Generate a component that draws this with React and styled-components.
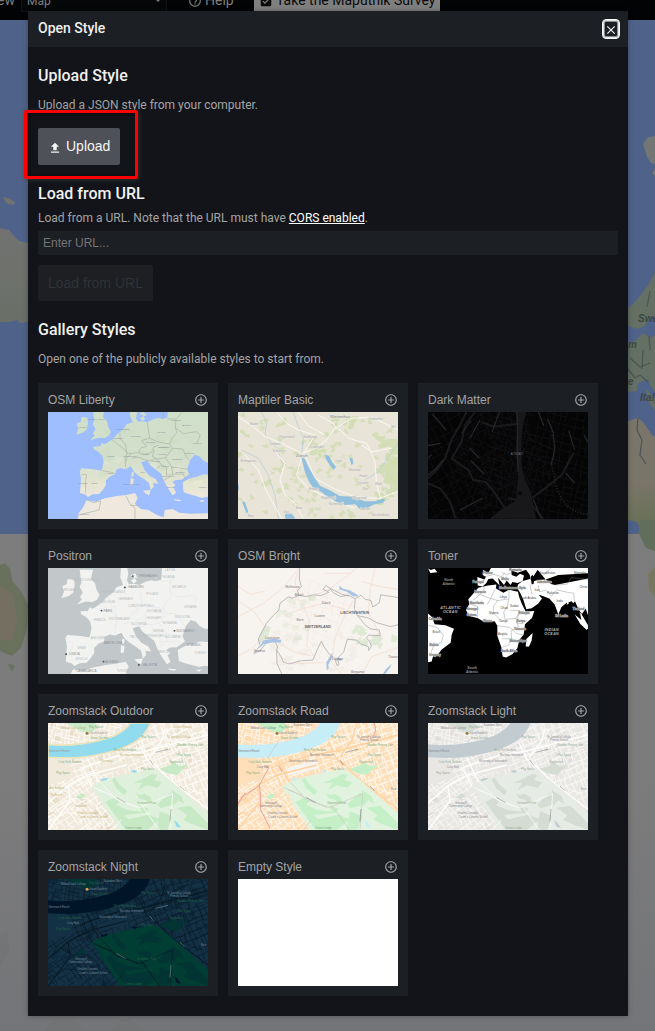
import React from "react";
import styled, { createGlobalStyle } from "styled-components";
import { MdAddCircleOutline, MdClose, MdFileUpload, MdHelpOutline, MdAssignmentTurnedIn } from "react-icons/md";

const GlobalStyle = createGlobalStyle`
  * { box-sizing: border-box; }
  body { margin: 0; background: #7a7b7c; font-family: Roboto, sans-serif; }
  h1, h2, p { margin: 0; }
`;

const Page = styled.div`
  position: relative;
  width: 655px;
  height: 1031px;
  overflow: hidden;
`;
const Backdrop = styled.svg`
  position: absolute;
  inset: 0;
`;
const TopBar = styled.header`
  position: absolute;
  top: -20px;
  left: 0;
  width: 100%;
  height: 40px;
  display: flex;
  background: #020304;
  color: #7e7e7e;
  font-size: 14px;
  line-height: 41px;
  white-space: nowrap;
`;
const ViewLabel = styled.span`
  width: 21px;
  padding-right: 6px;
  display: flex;
  justify-content: flex-end;
`;
const ViewSelect = styled.div`
  width: 146px;
  height: 32px;
  margin-right: 21px;
  padding: 10px 5px 0 5px;
  display: flex;
  justify-content: space-between;
  align-items: center;
  border: 1px solid #101214;
  background: #060708;
  font-size: 12px;
  line-height: 14px;
`;
const Caret = styled.i`
  border: 3px solid transparent;
  border-top-color: #777;
  margin-top: 2px;
`;
const HelpLink = styled.span`
  width: 66px;
  display: flex;
  gap: 3px;
  svg { margin-top: 14px; }
`;
const SurveyLink = styled.span`
  width: 186px;
  padding-left: 5px;
  display: flex;
  gap: 3px;
  background: #7f7f7f;
  color: #0a0a0a;
  svg { margin-top: 14px; }
`;

const Modal = styled.section`
  position: relative;
  width: 600px;
  height: 1005px;
  margin: 11px 0 0 28px;
  background: #121419;
  box-shadow: 0 0 5px rgba(0, 0, 0, 0.3);
  color: #a4a4a4;
`;
const ModalHeader = styled.div`
  height: 36px;
  padding: 0 8px 0 10px;
  display: flex;
  justify-content: space-between;
  background: #1c1f24;
`;
const ModalTitle = styled.h1`
  color: #f0f0f0;
  font-size: 14px;
  font-weight: 500;
  line-height: 34px;
`;
const CloseButton = styled.button`
  width: 18px;
  height: 20px;
  margin-top: 8px;
  padding: 2px 0 0;
  display: flex;
  align-items: center;
  justify-content: center;
  border: 1px solid #fff;
  border-radius: 4px;
  background: #1c1f24;
  box-shadow: inset 0 0 0 1px #e4e4e4, inset 0 0 0 2px #8b8c8e;
  color: #f4f4f4;
`;
const ModalBody = styled.div`
  padding: 20px 10px 20px;
`;
const Section = styled.section`
  height: ${(p) => p.$height || "auto"};
`;
const Heading = styled.h2`
  color: #f0f0f0;
  font-size: 16px;
  font-weight: 500;
  line-height: 18px;
`;
const Text = styled.p`
  font-size: 12px;
  line-height: 16px;
  margin-top: ${(p) => p.$top}px;
`;
const Link = styled.a`
  color: #fff;
  text-decoration: underline;
`;
const Button = styled.button`
  height: ${(p) => (p.$muted ? 36 : 37)}px;
  margin-top: ${(p) => p.$top}px;
  padding: ${(p) => (p.$muted ? "0 10px" : "0 10px 2px")};
  display: flex;
  align-items: center;
  gap: 4px;
  border: 0;
  border-radius: 2px;
  background: ${(p) => (p.$muted ? "#1d1f23" : "#4f5158")};
  color: ${(p) => (p.$muted ? "#303236" : "#f4f4f4")};
  font: 14px "Liberation Sans", sans-serif;
  svg { margin-top: 4px; }
`;
const UrlInput = styled.input`
  display: block;
  width: 580px;
  height: 24px;
  margin-top: 5px;
  padding: 0 5px;
  border: 0;
  background: #1c1f24;
  font: 12px "Liberation Sans", sans-serif;
  &::placeholder { color: #757575; opacity: 1; }
`;
const Gallery = styled.div`
  display: grid;
  grid-template-columns: repeat(3, 180px);
  gap: 10px;
  margin-top: 16px;
`;
const Card = styled.article`
  height: 145.67px;
  padding: 10px;
  background: #1c1f24;
`;
const CardTitle = styled.div`
  height: 19px;
  display: flex;
  justify-content: space-between;
  font: 12px/14px "Liberation Sans", sans-serif;
`;
const Thumb = styled.svg`
  display: block;
  width: 160px;
  height: 106.67px;
  background: ${(p) => p.$bg};
  font-family: "Liberation Sans", sans-serif;
`;
const Highlight = styled.div`
  position: absolute;
  left: 24px;
  top: 110px;
  width: 114px;
  height: 69px;
  border: 3px solid #fe0000;
  border-radius: 2px;
  box-shadow: 1px 1px 5px rgba(60, 64, 60, 0.7), inset 1px 1px 5px rgba(0, 0, 0, 0.6);
`;

function random(seed) {
  let s = seed;
  return () => {
    s = (s * 16807) % 2147483647;
    return s / 2147483647;
  };
}

// A family of roughly parallel, broken streets around a centre point.
function streets(seed, cx, cy, r, angle, step) {
  const rnd = random(seed);
  let d = "";
  for (const turn of [0, 1.5]) {
    const a = (angle * Math.PI) / 180 + turn;
    for (let o = -r; o < r; o += step * (0.6 + rnd() * 0.8)) {
      for (let t = -r; t < r; ) {
        const len = 18 + rnd() * 55;
        const at = (k, j) =>
          `${(cx + Math.cos(a) * k - Math.sin(a) * (o + j)).toFixed(0)} ${(cy + Math.sin(a) * k + Math.cos(a) * (o + j)).toFixed(0)}`;
        d += `M${at(t, 0)}Q${at(t + len / 2, rnd() * 8 - 4)} ${at(t + len, rnd() * 10 - 5)}`;
        t += len + rnd() * 16;
      }
    }
  }
  return d;
}

function blobs(seed, n, x, y, w, h, size) {
  const rnd = random(seed);
  let d = "";
  for (let i = 0; i < n; i++) {
    const cx = x + rnd() * w;
    const cy = y + rnd() * h;
    for (let k = 0; k < 9; k++) {
      const r = size * (0.25 + rnd());
      d += `${k ? "L" : "M"}${(cx + Math.cos(k * 0.7) * r).toFixed(0)} ${(cy + Math.sin(k * 0.7) * r * 0.8).toFixed(0)}`;
    }
    d += "Z";
  }
  return d;
}

function Labels({ items, color, size = 8, halo, ...rest }) {
  return (
    <g fill={color} fontSize={size} textAnchor="middle" stroke={halo} strokeWidth={halo ? 2 : 0} paintOrder="stroke" {...rest}>
      {items.map(([name, x, y]) => (
        <text key={name + x + y} x={x} y={y}>{name}</text>
      ))}
    </g>
  );
}

const EUROPE =
  "M415 90L412 128 398 132 385 129 370 133 352 142 338 139 324 140 318 130 322 111 318 90 302 90 300 122 308 142 290 148 280 163 262 177 248 192 232 203 224 208 215 204 211 214 190 215 192 223 205 230 217 243 221 262 215 287 190 283 154 280 149 288 153 312 150 354 165 358 174 366 188 358 207 357 219 344 228 330 228 316 240 304 255 298 258 285 270 279 286 282 303 274 312 290 326 302 345 314 357 324 362 345 371 335 369 324 385 326 377 312 358 302 343 284 334 262 352 256 360 270 376 283 394 297 401 316 412 337 428 361 438 354 430 336 437 330 427 321 437 315 455 314 465 307 478 298 471 284 480 256 494 239 508 244 519 256 534 264 580 260 580 90ZM188 100L225 100 219 125 231 139 235 157 243 170 236 182 224 189 205 188 181 196 194 182 189 175 197 163 188 148 193 136ZM155 126L173 128 174 145 170 164 158 173 138 179 145 161 140 146 152 140ZM458 322L477 311 500 305 520 298 580 302 580 370 530 365 517 369 497 363 478 358 461 352ZM142 450L146 414 158 399 170 375 196 380 225 370 260 363 288 360 315 354 323 368 315 386 332 402 355 405 382 421 401 427 404 405 428 402 448 413 480 416 580 414 580 460ZM306 290L312 293 310 305 303 304ZM302 308L312 312 309 329 301 330ZM339 347L362 345 357 361 346 355ZM431 373L455 375 449 379 434 376ZM508 377L524 375 517 382ZM329 130L340 123 345 132 337 138ZM328 116L340 110 350 120 342 124Z";
const BORDERS =
  "M217 287L250 293M154 299L170 299 166 323 167 355M245 193L260 205 283 223 291 235 285 253 287 277M270 175L270 192 285 205 291 235M291 235L305 235 325 233 333 218 350 215 335 196 359 190 355 165 352 142M305 235L290 250 288 260M306 249L328 247 342 254M325 233L345 238 365 232 372 215 385 211M359 190L388 202 418 207M412 132L438 132 436 158 441 172 425 192 418 208 428 220 407 248 382 252 367 245 373 224M388 217L420 217M436 158L460 176 499 170 511 180 500 205M440 132L454 113M428 220L458 222 468 244 478 255M407 248L425 276 470 282M425 276L428 298 460 297M342 254L362 258 376 250 394 269 382 280M394 269L410 278 409 300 428 300M401 316L420 305M460 297L465 310M170 375L190 383 212 378 207 405 145 420M288 362L298 384 315 400 315 432M398 131L400 111";
const COUNTRIES = [
  ["United Kingdom", 199, 134], ["Ireland", 157, 160], ["Netherlands", 278, 166], ["Germany", 318, 187], ["Poland", 394, 173], ["Belarus", 470, 152], ["Ukraine", 501, 208], ["Belgium", 265, 192], ["Czechia", 361, 204], ["France", 243, 246], ["Switzerland", 300, 246], ["Austria", 345, 239], ["Hungary", 397, 239], ["Slovakia", 398, 218], ["Moldova", 478, 237], ["Romania", 442, 254], ["Serbia", 405, 276], ["Bulgaria", 450, 295], ["Italy", 338, 295], ["Croatia", 378, 260], ["Andorra", 240, 296], ["Portugal", 159, 326], ["Spain", 193, 326], ["Macedonia", 415, 306], ["Greece", 422, 338], ["Türkiye", 519, 340], ["Tunisia", 311, 393], ["Morocco", 163, 421], ["Tyrrhenian Sea", 304, 331], ["Lithuania", 438, 138],
];

function LibertyMap() {
  return (
    <Thumb viewBox="54 111 480 320" preserveAspectRatio="none" $bg="#9fbeff">
      <defs>
        <linearGradient id="liberty" x1="0" y1="90" x2="0" y2="430" gradientUnits="userSpaceOnUse">
          <stop offset="0" stopColor="#cfdfca" />
          <stop offset=".48" stopColor="#d3dfcb" />
          <stop offset=".68" stopColor="#e2e4cf" />
          <stop offset=".83" stopColor="#eee8de" />
        </linearGradient>
        <clipPath id="land"><path d={EUROPE} /></clipPath>
      </defs>
      <path d={EUROPE} fill="url(#liberty)" />
      <path d={blobs(81, 28, 220, 130, 300, 180, 18)} fill="#c0d8c0" opacity=".2" clipPath="url(#land)" />
      <path d={blobs(12, 15, 160, 250, 350, 160, 15)} fill="#f1eee1" opacity=".3" clipPath="url(#land)" />
      <path d={BORDERS} fill="none" stroke="#a2b09d" strokeWidth="1.8" />
      <Labels items={COUNTRIES} color="#8a899d" size={7.5} />
    </Thumb>
  );
}

function PositronMap() {
  return (
    <Thumb viewBox="54 99 480 318" preserveAspectRatio="none" $bg="#c2c8ca">
      <g transform="matrix(1.09 0 0 1.08 -56 -4)">
        <path d={EUROPE} fill="#f2f3f1" />
        <path d={BORDERS} fill="none" stroke="#dfe2e1" strokeWidth="1.3" />
      </g>
      <Labels color="#b9bdbe" size={9} items={[["UNITED KINGDOM", 168, 138], ["IRELAND", 119, 168], ["NETHERLANDS", 252, 174], ["GERMANY", 288, 195], ["POLAND", 367, 180], ["BELARUS", 448, 160], ["LITHUANIA", 410, 130], ["LATVIA", 420, 108], ["BELGIUM", 235, 202], ["CZECH REPUBLIC", 334, 214], ["SLOVAKIA", 372, 229], ["UKRAINE", 481, 218], ["FRANCE", 209, 257], ["SWITZERLAND", 268, 255], ["HUNGARY", 373, 250], ["MOLDOVA", 457, 248], ["ROMANIA", 419, 266], ["SLOVENIA", 326, 268], ["SERBIA", 384, 290], ["MONTENEGRO", 370, 304], ["BULGARIA", 428, 308], ["ANDORRA", 205, 310], ["ITALY", 310, 307], ["SPAIN", 155, 340], ["SEVILLE", 154, 374], ["GREECE", 398, 353], ["TURKEY", 512, 354], ["TUNISIA", 278, 410]]} />
      <Labels color="#8b9194" size={9} items={[["COPENHAGEN", 350, 127], ["HAMBURG", 318, 160], ["PARIS", 234, 229], ["LISBOA", 133, 359], ["BUCHAREST", 467, 290], ["ISTANBUL", 491, 332], ["BARCELONA", 249, 326], ["ALGIERS", 245, 381], ["VALLETTA", 359, 391], ["CASABLANCA", 169, 410]]} />
      <path d="M308 123h1M284 157h1M214 226h1M108 356h1M433 286h1M220 378h1M326 388h1" stroke="#4d5256" strokeWidth="5" strokeLinecap="round" />
    </Thumb>
  );
}

function BasicMap() {
  return (
    <Thumb viewBox="39 111 480 320" preserveAspectRatio="none" $bg="#e8e4d8">
      <path d={blobs(41, 75, 39, 111, 480, 320, 11)} fill="#cddcab" opacity=".7" />
      <path d={blobs(23, 26, 465, 190, 54, 190, 20) + blobs(17, 9, 330, 125, 60, 35, 13) + blobs(9, 13, 235, 190, 65, 55, 11)} fill="#cddcab" opacity=".75" />
      <path d={blobs(8, 16, 285, 240, 170, 75, 10) + blobs(55, 14, 200, 280, 80, 140, 10)} fill="#cddcab" opacity=".6" />
      <g fill="none" stroke="#b4cbd1" strokeWidth="2">
        <path d="M110 111L125 145 120 180 155 220 170 260M205 111L220 155 235 190 230 245M50 225L100 250 130 300 150 360 160 431M519 205L495 240 460 290 420 315" />
      </g>
      <g fill="none" stroke="#faf8f2" strokeWidth="3">
        <path d="M39 125L85 155 120 185 170 205 230 235 260 225 300 200 330 160 380 130 440 126 519 165M155 111L185 145 220 165 270 180 230 245M60 240L100 285 125 350 170 431M155 235L180 265 165 315 180 360 210 385 235 431M230 245L215 300 250 340 310 370 390 400M240 240L270 310 335 345 390 365 460 371 519 350M335 155L370 190 425 205 450 260 455 330 470 380M220 111L250 153 300 180M280 120L325 145 335 165M410 210L440 230 500 220" />
      </g>
      <path d="M229 246L239 251 252 278 268 307 285 332 319 348 344 363 379 365 390 362 398 371 419 379 449 379 474 371 481 375 474 383 445 389 428 398 403 401 391 388 361 390 336 382 308 365 288 350 266 340 252 321 239 289ZM301 238L312 243 323 264 333 275 326 285 316 272 302 252ZM373 247L383 251 385 266 379 270ZM51 379L60 381 70 410 64 415ZM180 416L201 416 211 431 181 431ZM39 325L42 338 39 349Z" fill="#91c0df" />
      <Labels items={[["Zürich", 231, 247], ["Winterthur", 345, 129]]} color="#777d83" size={13} halo="#efebe1" />
      <Labels items={[["Baden", 88, 151], ["Regensdorf", 186, 188], ["Glattbrugg", 254, 188], ["Dübendorf", 277, 220], ["Dietikon", 150, 211], ["Schlieren", 161, 231], ["Bremgarten", 70, 261], ["Uster", 340, 262], ["Wetzikon", 389, 287], ["Horgen", 266, 344], ["Wädenswil", 310, 373], ["Richterswil", 333, 390], ["Rapperswil", 403, 372], ["Rüti", 421, 346], ["Dürnten", 414, 328], ["Hinwil", 415, 305], ["Wald", 460, 331], ["Turbenthal", 453, 134], ["Wil", 504, 160], ["Zug", 183, 414], ["Baar", 222, 403], ["Muri", 77, 427], ["Lachen", 421, 404], ["Schübelbach", 467, 423]]} color="#a3a6a8" size={9} halo="#efebe1" />
    </Thumb>
  );
}

function DarkMap() {
  return (
    <Thumb viewBox="39 111 480 320" preserveAspectRatio="none" $bg="#050506">
      <g fill="none" stroke="#141416" strokeWidth="2">
        <path d={streets(9, 110, 200, 220, 65, 27)} />
        <path d={streets(23, 430, 260, 210, 15, 24)} />
        <path d={streets(29, 240, 250, 110, 25, 18)} stroke="#101012" />
      </g>
      <g fill="none" stroke="#1b1b1e" strokeWidth="6" strokeLinejoin="round">
        <path d="M155 111L135 150 110 193 91 248 69 281 39 310M180 111L150 150 140 200 110 250 160 285 175 315 212 321 240 355 275 408M325 145L235 155 200 141M350 370L390 340 440 300 475 235M39 325L75 340 105 380 122 431M280 370L345 382 385 431" />
      </g>
      <g fill="none" stroke="#27272b" strokeWidth="3.5">
        <path d="M253 111L231 172M370 111L387 153M398 132L415 174 419 225 408 270M461 167L479 224M52 117L93 165M164 219L193 250M167 256L207 297M39 212L77 205M195 135L165 190M39 300L60 284 84 255M135 405L203 369M228 431L266 402M452 294L480 325M355 373L378 431M507 179L519 202M39 250L50 238M140 175L168 137" />
      </g>
      <path d="M303 111L334 111 324 150 319 200 320 270 328 310 349 354 351 372 363 431 229 431 266 399 303 377 309 305 303 240 305 175Z" fill="#18181a" />
      <path d="M305 111L308 155 307 220 309 290" stroke="#26262b" strokeWidth="3" fill="none" />
      <path d="M411 180Q427 220 410 265L420 320Q440 410 519 418" fill="none" stroke="#202022" strokeWidth="5" strokeDasharray="4 5" />
      <circle cx="315" cy="355" r="6" fill="#09090a" />
      <Labels items={[["ALTSTADT", 306, 240]]} color="#68696b" size={8} />
    </Thumb>
  );
}

function BrightMap() {
  return (
    <Thumb viewBox="39 99 480 318" preserveAspectRatio="none" $bg="#f7f3ee">
      <g fill="#dfe9d5">
        <path d={blobs(27, 12, 160, 190, 90, 90, 13)} opacity=".55" />
        <path d={blobs(31, 9, 390, 280, 120, 48, 17)} />
        <path d="M121 270L137 276 128 306 99 327 103 298ZM205 302L225 298 233 311 206 320ZM250 180L274 183 267 197 250 197ZM453 317L475 325 463 342Z" />
      </g>
      <path d={blobs(41, 25, 150, 290, 240, 115, 14)} fill="#eeeae4" opacity=".7" />
      <g fill="none" stroke="#f3d9cb" strokeWidth="2">
        <path d="M39 244L115 205 174 158 212 111M39 153L75 177 119 168M39 197L87 229 130 290M210 180L235 210 253 260 245 330 275 375M250 185L305 166 367 123 395 99M220 99L210 143 221 182M180 240L233 220 297 205 360 222M385 195L350 259 330 310 320 380 350 417M450 99L436 160 430 230 470 310M519 163L460 153 410 139M39 361L80 340 110 311 153 301M410 417L440 363 519 336M155 320L210 351 258 360M160 360L200 385 295 381M298 115L375 115" />
        <path d={streets(67, 265, 225, 80, 20, 22)} strokeWidth="1.2" opacity=".6" />
      </g>
      <path d="M224 99L223 135 229 154 218 166 221 181 202 189 190 185 165 204 161 226 146 239 125 263 100 310 105 330 87 354 106 345 123 323 149 317 158 333 155 344 169 365 175 379 192 385 230 375 263 374 277 342 289 317 299 337 314 357 329 368 336 390 342 387 337 368 356 350 367 311 394 314 407 325 431 334 431 345 439 333 434 318 424 307 431 299 466 301 463 284 438 281 422 271 407 252 397 241 388 219 391 191 370 180 347 184 325 173 316 162 309 169 294 163 303 151 316 160 350 177 372 183M221 181L245 184 265 179 289 181 312 171M391 191L408 180 420 192 438 196 443 215 463 203 467 179 519 187M397 241L430 248 455 262 480 269 496 274 519 268M155 344L156 383 171 417" fill="none" stroke="#aaabad" strokeWidth="2.3" />
      <g fill="#a9c3e5">
        <path d="M344 151L352 160 374 165 396 178 401 184 384 183 364 169 343 163ZM102 339L113 317 125 312 150 310 168 314 168 321 139 321 116 326ZM323 353L320 370 310 386 311 400 305 403 304 381 316 360ZM500 385L494 398 479 417 473 417 483 400ZM340 365L351 371 347 377 334 370Z" />
      </g>
      <Labels items={[["SWITZERLAND", 278, 277], ["LIECHTENSTEIN", 389, 235]]} color="#66666b" size={11} fontWeight="bold" />
      <Labels items={[["Mulhouse", 202, 159], ["Zürich", 303, 206], ["Basel", 222, 183], ["Luzern", 284, 246], ["Bern", 225, 258], ["Lausanne", 142, 310], ["Genève", 103, 350], ["Lugano", 338, 373], ["Bergamo", 398, 411], ["Tirano", 504, 366]]} color="#77787b" size={10} />
    </Thumb>
  );
}

const WORLD =
  "M228 99L220 114 204 105 203 120 213 125 208 133 187 126 188 151 203 154 214 144 220 132 233 130 254 151 249 128 267 150 275 136 287 150 292 141 308 144 323 138 327 121 315 116 304 125 290 120 289 106 308 113 333 104 344 119 347 134 357 121 368 104 383 123 392 133 408 147 420 150 470 140 519 130 519 99ZM190 158L219 151 244 148 243 160 265 173 282 164 309 170 312 184 321 207 332 229 358 227 351 248 330 267 326 297 313 314 307 338 292 356 273 366 263 363 259 335 247 302 247 271 239 258 208 260 189 249 163 242 153 225 163 206 160 192ZM323 138L345 132 352 140 368 135 392 133 430 120 519 115 519 282 499 254 496 238 485 217 470 198 454 203 439 216 430 238 419 208 403 190 379 181 371 179 360 182 343 166 358 180 371 179 381 190 370 205 350 219 334 222 325 194 316 174 307 159 309 148ZM39 235L51 245 59 267 91 270 117 280 110 298 107 322 80 342 66 361 54 363 50 378 39 380ZM353 293L350 315 342 333 332 333 334 311ZM39 100L47 105 59 101 67 112 46 114ZM479 238L500 255 519 276 515 284 496 266ZM458 197L462 204 455 209Z";
function TonerMap() {
  return (
    <Thumb viewBox="39 99 480 318" preserveAspectRatio="none" $bg="#000">
      <path d={WORLD} fill="#fff" />
      <path d="M347 125L353 119 358 130 356 146 350 148ZM474 205L480 198 486 212 496 230 503 238 490 230ZM500 238L512 220 519 240 519 270Z" fill="#000" />
      <path d="M174 196L206 168 208 152M188 175L227 190 241 160M217 208L227 190 248 196 282 191 282 164M248 196L235 213 236 234 259 256M282 191L276 216 266 230 270 252 303 249 315 226 286 225M303 249L310 275 288 287 290 310 262 310M248 271L285 276 303 294 325 299M262 335L280 329 289 310 307 316M326 265L304 263 313 229M39 270L65 275 85 300 79 321 55 332 49 350M370 151L373 170 392 165 409 183 425 164 455 171 476 174 478 198M345 148L350 176M420 150L457 147 469 128 519 133M382 123L408 99M208 125L237 118 260 125 270 112M163 206L188 214 187 249M260 111L275 120 290 112" fill="none" stroke="#8c8c8c" strokeWidth="1.3" />
      <Labels items={[["Libya", 265, 187], ["Chad", 267, 220], ["Iran", 366, 168], ["India", 434, 200], ["China", 505, 160], ["Brazil", 64, 294], ["Saudi Arabia", 338, 190], ["Kazakhstan", 397, 116], ["Mongolia", 495, 118], ["Angola", 263, 298], ["Pakistan", 414, 176], ["Nigeria", 236, 237], ["Sudan", 298, 214], ["Congo", 265, 261]]} color="#444" size={9} />
      <Labels items={[["Portugal", 189, 143], ["Morocco", 195, 174], ["Mauritania", 185, 207], ["Senegal", 172, 223], ["Guinea", 170, 241], ["Ghana", 217, 261], ["Ethiopia", 327, 235], ["Kenya", 318, 261], ["Tanzania", 315, 283], ["Mozambique", 309, 320], ["South Africa", 282, 350], ["Uzbekistan", 388, 145], ["Mediterranean", 281, 161], ["Sri Lanka", 440, 244], ["France", 218, 118], ["Malta", 270, 134], ["Syria", 322, 162], ["Thailand", 490, 223], ["Colombia", 60, 253], ["Bolivia", 57, 332], ["Uruguay", 60, 362], ["Romania", 301, 108]]} color="#555" halo="#c4c4c4" size={9} />
      <Labels items={[["ATLANTIC", 107, 221], ["OCEAN", 106, 234], ["INDIAN", 410, 288], ["OCEAN", 410, 300]]} color="#bbb" size={11} fontStyle="italic" fontWeight="bold" letterSpacing="1" />
      <Labels items={[["North", 101, 137], ["Atlantic", 101, 149], ["South", 171, 401], ["Atlantic", 171, 411]]} color="#999" size={10} fontStyle="italic" fontWeight="bold" />
    </Thumb>
  );
}

const PARK = "M185 290L205 277 260 259 325 245 368 237 385 244 419 269 457 302 490 332 534 370 534 420 269 420 251 391 238 371 222 350 211 329 206 314 196 309Z";
const GREENWICH = {
  outdoor: { bg: "#f1eadc", block: "#e6dac6", street: "#fcfaf5", main: "#fffefa", minor: "#d1cfca", park: "#dff1dc", wood: "#c8e9c5", water: "#91dbee", place: "#c3b27a", green: "#7fb384", text: "#999a94" },
  road: { bg: "#ffdfba", block: "#ffd6a8", street: "#fff6ea", main: "#ffd2a0", minor: "#c9c5bf", park: "#e1f3df", wood: "#c4efc7", water: "#c7edf7", place: "#81766d", green: "#7fae82", text: "#828188" },
  light: { bg: "#e9e7e4", block: "#dfdcd8", street: "#f6f5f3", main: "#fffefe", minor: "#c9c8c5", park: "#e6ebe6", wood: "#d4dcd4", water: "#c2ccd0", place: "#8a8988", green: "#95aa98", text: "#8b8b8f" },
  night: { bg: "#133044", block: "#0f293c", street: "#0a1c2a", main: "#06141e", minor: "#061821", park: "#003d33", wood: "#023433", water: "#011529", place: "#8198a8", green: "#246447", text: "#71899b" },
};
function GreenwichMap({ kind }) {
  const c = GREENWICH[kind];
  const id = `streets-${kind}`;
  return (
    <Thumb viewBox="54 99 480 320" preserveAspectRatio="none" $bg={c.bg}>
      <defs>
        <clipPath id={id + "a"}><path d="M54 99H310L240 145 160 170 54 170Z" /></clipPath>
        <clipPath id={id + "b"}><path d="M54 199L180 190 280 160 345 128 365 99H534V365L385 240 185 285 54 330Z" /></clipPath>
        <clipPath id={id + "c"}><path d="M54 285L180 250 190 300 280 420H54Z" /></clipPath>
        <clipPath id={id + "park"}><path d={PARK} /></clipPath>
      </defs>
      <path d={blobs(37, 45, 54, 99, 480, 310, 16)} fill={c.block} opacity=".8" />
      <g fill="none" stroke={c.street} strokeWidth={kind === "night" ? 2 : 3.2}>
        <path d={streets(6, 160, 130, 160, 12, 13)} clipPath={`url(#${id}a)`} />
        <path d={streets(9, 390, 180, 270, -20, 19)} clipPath={`url(#${id}b)`} />
        <path d={streets(49, 460, 190, 130, 70, 26)} clipPath={`url(#${id}b)`} />
        <path d={streets(15, 120, 340, 190, -35, 17)} clipPath={`url(#${id}c)`} />
        <path d="M54 370Q110 320 160 325T225 420M54 395L100 370 150 370 183 420M82 300L135 330 155 405M470 245Q445 300 520 310M435 105Q375 150 440 155T530 150" />
      </g>
      <path d="M108 99L193 99 202 111 185 127 157 125ZM388 236L420 226 430 218 449 228 476 224 456 240 442 255 410 250ZM137 322L155 309 166 316 151 329Z" fill={c.wood} />
      <path d="M200 235L290 211 295 235 208 256Z" fill={kind === "road" ? "#f7f4f0" : c.bg} />
      <g fill="none" stroke={c.main} strokeWidth={kind === "night" ? 2.5 : 4}>
        <path d="M185 290L171 258 155 234 190 221 269 196 350 183 534 135M325 155L350 207 370 226M365 215L420 270 534 358M54 340L115 286 173 255 290 225M171 203L190 245 209 280M405 115L395 153 360 200M54 420L120 333 114 288" />
      </g>
      {kind === "road" && <path d="M54 338L68 319 116 289 145 236 138 225M39 367L75 309M118 280L122 323 122 360 150 415M176 227L187 246M462 99Q473 124 456 145" fill="none" stroke="#efa19c" strokeWidth="3" />}
      <path d="M54 163C115 171 203 158 251 138 278 125 293 112 301 99L361 99C352 122 342 137 322 151 276 184 180 204 110 204L54 202Z" fill={c.water} stroke={kind === "outdoor" ? "#eee4bb" : "none"} strokeWidth="5" />
      <path d="M180 147L142 205" stroke={c.minor} strokeWidth="2" strokeDasharray={kind === "outdoor" ? "4 3" : "none"} />
      <path d={PARK} fill={c.park} />
      <g fill={c.wood} clipPath={`url(#${id}park)`}>
        <path d="M246 270L253 262 270 285 292 303 283 315 260 297ZM309 280L344 264 366 252 382 255 373 270 396 277 383 293 351 286 323 301 337 278ZM318 310L330 315 344 311 364 323 361 345 344 329 327 325ZM226 336L252 323 269 333 258 345 292 360 336 365 326 346 356 356 348 368 282 375 294 388 357 374 390 388 352 419 287 419ZM382 343L420 308 435 317 426 345 391 355ZM425 300L454 318 463 341 444 331 430 349ZM390 364L427 378 412 419 380 420ZM440 353L481 347 534 400 534 420 488 403 460 390 472 376Z" />
      </g>
      <g fill="none" stroke={kind === "outdoor" || kind === "light" ? "#f6f7f4" : c.minor} strokeWidth={kind === "night" ? 2 : 3}>
        <path d="M190 292L226 307 267 332 329 353 428 311 420 419M329 337L388 420M212 278L253 322 322 353M204 300L245 315M250 419L274 389" opacity={kind === "road" ? 0.6 : 1} />
      </g>
      <path d="M301 243L313 240 322 244 314 249ZM213 267L235 263 229 270 213 274ZM432 391L441 397 453 413 440 411Z" fill={c.water} />
      {kind !== "outdoor" && <Labels color={c.text} size={8} items={[["University of Greenwich", 249, 216], ["Maritime Greenwich", 305, 199], ["St Joseph's Catholic", 448, 145], ["Primary School", 447, 154], ["Cutty Sark", 129, 235], ["Greenwich", 153, 342], ["Community College", 152, 352], ["Ursuline Convent", 172, 373], ["Croom's Convent School", 189, 383], ["Millwall Dock College", 130, 116], ["Saunders Ness", 248, 108], ["East", 521, 299]]} />}
      <Labels color={c.text} size={8} items={[["Island Gardens", 205, 132], ["Greenwich Reach", 87, 186]]} />
      <Labels color={c.green} size={8} items={[["Play Space", 197, 114], ["Island Gardens", 209, 148], ["Play Space", 354, 144], ["Play Space", 353, 239], ["Cutty Sark Gardens", 120, 218], ["Play Space", 99, 253], ["Meridian Primary Gdn", 480, 169], ["Play Space", 463, 198], ["Playground", 438, 220], ["West Pier Gardens", 285, 183], ["Greenwich Park", 350, 341], ["Dennis Lodge", 311, 416]]} />
      {kind === "outdoor" && <Labels color={c.place} size={8} items={[["Arts Building", 80, 297], ["St Mary's", 78, 318], ["St John Primary", 457, 115], ["Millwall Dock College", 130, 117], ["Ursuline Convent", 172, 373], ["Croom's Convent School", 189, 383], ["Greenwich", 153, 351], ["University", 230, 215], ["Maritime Greenwich", 305, 199], ["St Joseph's Catholic", 448, 145]]} />}
      <path d="M260 323L287 338M360 211L371 226M450 289L464 302M423 358L420 395M377 187L414 178" stroke={c.text} strokeWidth="3" strokeDasharray="2 1" />
      <circle cx="171" cy="130" r="4.5" fill={kind === "night" ? "#d5a653" : "#947b42"} />
    </Thumb>
  );
}

const STYLES = [
  ["OSM Liberty", <LibertyMap />],
  ["Maptiler Basic", <BasicMap />],
  ["Dark Matter", <DarkMap />],
  ["Positron", <PositronMap />],
  ["OSM Bright", <BrightMap />],
  ["Toner", <TonerMap />],
  ["Zoomstack Outdoor", <GreenwichMap kind="outdoor" />],
  ["Zoomstack Road", <GreenwichMap kind="road" />],
  ["Zoomstack Light", <GreenwichMap kind="light" />],
  ["Zoomstack Night", <GreenwichMap kind="night" />],
  ["Empty Style", <Thumb $bg="#fff" />],
];

function WorldBackdrop() {
  return (
    <Backdrop width="655" height="1031">
      <defs>
        <linearGradient id="ground" x1="0" y1="0" x2="0" y2="1">
          <stop offset="0" stopColor="#7d7d7d" />
          <stop offset=".55" stopColor="#7b7b7c" />
          <stop offset="1" stopColor="#747578" />
        </linearGradient>
        <linearGradient id="africa" x1="0" y1="418" x2="0" y2="534" gradientUnits="userSpaceOnUse">
          <stop offset="0" stopColor="#7a756b" />
          <stop offset=".55" stopColor="#7a7569" />
          <stop offset="1" stopColor="#647052" />
        </linearGradient>
        <linearGradient id="america" x1="0" y1="228" x2="0" y2="322" gradientUnits="userSpaceOnUse">
          <stop offset="0" stopColor="#727371" />
          <stop offset="1" stopColor="#6a6f68" />
        </linearGradient>
      </defs>
      <rect y="533" width="655" height="498" fill="url(#ground)" />
      <rect width="655" height="534" fill="#4f6289" />
      <path d="M3 197L8 198 15 202 13 205 6 203ZM0 228L9 230 14 236 19 241 28 243V322L20 323 17 320 9 322 0 322Z" fill="url(#america)" />
      <path d="M0 565L5 563 10 569 13 582 21 591 28 605 27 629 21 648 12 656 0 651ZM8 664L15 665 12 672Z" fill="#69715d" />
      <path d="M0 586L13 594 17 619 12 641 0 640Z" fill="#756f62" />
      <path d="M655 136L648 137 643 144 647 157 651 163 655 164ZM655 169L652 173 655 176Z" fill="#727674" />
      <path d="M655 272L650 282 643 292 635 302 628 308V326L637 329 645 326 649 319 655 317ZM628 343L635 341 643 333 651 338 655 335V392L650 385 648 379 638 383 637 391 628 392ZM645 388L655 399V410L649 403Z" fill="#637063" />
      <path d="M628 421L638 418 643 422 652 435 655 437V534H638L640 529 637 522 628 520Z" fill="url(#africa)" />
      <path d="M655 520H640L639 534 646 548 655 551Z" fill="#616e5b" />
      <path d="M655 567L648 574 649 590 655 597Z" fill="#777760" />
      <path d="M628 369L635 378 640 375 648 382M630 358L640 367 650 363M643 350L642 369M649 336L650 350M638 418L637 430 642 440 640 455 646 464M650 291L647 307" fill="none" stroke="#4d5651" strokeWidth="1.3" />
      <g fill="#3e4844" fontFamily="Liberation Sans" fontSize="10" fontStyle="italic" fontWeight="bold">
        <text x="638" y="322">Swe</text><text x="628" y="348">m</text><text x="628" y="385">e</text><text x="640" y="401">Italy</text>
      </g>
      <path d="M120 1021L130 1018 143 1031H110ZM52 1020L73 1016 85 1031H45ZM0 936L7 931 9 952 0 966Z" fill="#696b6d" opacity=".23" />
    </Backdrop>
  );
}

export default function App() {
  return (
    <Page>
      <GlobalStyle />
      <WorldBackdrop />
      <TopBar>
        <ViewLabel>View</ViewLabel>
        <ViewSelect>Map<Caret /></ViewSelect>
        <HelpLink><MdHelpOutline size={14} />Help</HelpLink>
        <SurveyLink><MdAssignmentTurnedIn size={14} />Take the Maputnik Survey</SurveyLink>
      </TopBar>
      <Modal>
        <ModalHeader>
          <ModalTitle>Open Style</ModalTitle>
          <CloseButton aria-label="Close"><MdClose size={14} /></CloseButton>
        </ModalHeader>
        <ModalBody>
          <Section $height="118px">
            <Heading>Upload Style</Heading>
            <Text $top={12}>Upload a JSON style from your computer.</Text>
            <Button $top={15}><MdFileUpload size={14} />Upload</Button>
          </Section>
          <Section $height="136px">
            <Heading>Load from URL</Heading>
            <Text $top={7}>Load from a URL. Note that the URL must have <Link>CORS enabled</Link>.</Text>
            <UrlInput placeholder="Enter URL..." />
            <Button $top={10} $muted>Load from URL</Button>
          </Section>
          <Section>
            <Heading>Gallery Styles</Heading>
            <Text $top={12}>Open one of the publicly available styles to start from.</Text>
            <Gallery>
              {STYLES.map(([name, map]) => (
                <Card key={name}>
                  <CardTitle>{name}<MdAddCircleOutline size={14} /></CardTitle>
                  {map}
                </Card>
              ))}
            </Gallery>
          </Section>
        </ModalBody>
      </Modal>
      <Highlight />
    </Page>
  );
}
